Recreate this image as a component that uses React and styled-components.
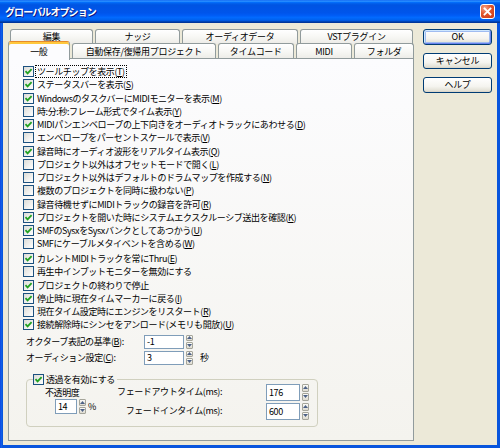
import React from 'react';
import styled, { createGlobalStyle } from 'styled-components';

const Global = createGlobalStyle`
  html, body { margin: 0; padding: 0; background: #fff; }
  body { font-family: "Noto Sans CJK JP", "Noto Sans", sans-serif; color: #000; }
  #root { width: 500px; height: 448px; }
`;

const Window = styled.div`
  width: 500px;
  height: 448px;
  box-sizing: border-box;
  display: flex;
  flex-direction: column;
  background: linear-gradient(90deg, #0831d9 0, #166aee 1px, #0855dd 2px, #0855dd 100%);
  overflow: hidden;
`;

const TitleBar = styled.div`
  height: 23px;
  flex: none;
  display: flex;
  align-items: center;
  justify-content: space-between;
  padding: 0 5px 0 5px;
  background: linear-gradient(180deg, #0058ee 0%, #3593ff 4%, #288eff 6%, #127dff 8%, #036ffc 10%, #0262ee 14%, #0057e5 20%, #0054e3 24%, #0055eb 56%, #005bf5 66%, #026afe 76%, #0062ef 86%, #0052d6 92%, #0040ab 94%, #003092 100%);
`;

const Title = styled.span`
  color: #fff;
  font-size: 10px;
  font-weight: bold;
  letter-spacing: -0.9px;
  text-shadow: 1px 1px 0 #0a1883;
`;

const CloseButton = styled.div`
  width: 15px;
  height: 15px;
  box-sizing: border-box;
  border: 1px solid #fff;
  border-radius: 3px;
  background: radial-gradient(circle at 30% 25%, #f4a48c 0%, #e0542a 45%, #c7381a 100%);
  display: flex;
  align-items: center;
  justify-content: center;
`;

const Body = styled.div`
  flex: 1;
  margin: 0 3px 3px 3px;
  background: #ece9d8;
  display: flex;
  gap: 9px;
  padding: 6px 5px 4px 5px;
  min-height: 0;
`;

const TabArea = styled.div`
  width: 406px;
  display: flex;
  flex-direction: column;
`;

const TabRow = styled.div`
  display: flex;
  align-items: flex-start;
  height: ${p => p.$h}px;
  padding-left: ${p => p.$pad || 0}px;
  gap: 2px;
`;

const Tab = styled.div`
  position: relative;
  width: ${p => p.$w}px;
  height: ${p => (p.$active ? 19 : p.$h + 1)}px;
  margin-top: ${p => (p.$active ? -2 : 0)}px;
  box-sizing: border-box;
  border: 1px solid #919b9c;
  border-bottom: none;
  border-radius: 3px 3px 0 0;
  background: ${p => (p.$active ? '#fcfcfe' : 'linear-gradient(180deg, #ffffff 0%, #f7f7f4 50%, #ecebe6 100%)')};
  ${p => p.$active && 'border-top: 1px solid #e68b2c; box-shadow: inset 0 2px 0 #ffc83c;'}
  z-index: ${p => (p.$active ? 3 : 1)};
  font-size: 9px;
  letter-spacing: -0.3px;
  line-height: ${p => (p.$active ? 17 : p.$h)}px;
  text-align: center;
  white-space: nowrap;
  padding-top: ${p => (p.$active ? 1 : 0)}px;
`;

const Panel = styled.div`
  flex: 1;
  position: relative;
  z-index: 2;
  border: 1px solid #919b9c;
  background: linear-gradient(180deg, #fcfcfe 0%, #f4f3ee 100%);
  padding: 6px 0 0 14px;
  display: flex;
  flex-direction: column;
  min-height: 0;
`;

const CheckRow = styled.div`
  display: flex;
  align-items: center;
  height: 13.25px;
  gap: 2px;
  margin-top: ${p => p.$gap || 0}px;
  font-size: 9px;
  letter-spacing: -0.4px;
  white-space: nowrap;
`;

const Box = styled.span`
  width: 11px;
  height: 11px;
  flex: none;
  box-sizing: border-box;
  border: 1px solid #1c5180;
  background: linear-gradient(135deg, #dcdcd7 0%, #ffffff 100%);
  display: flex;
  align-items: center;
  justify-content: center;
`;

const Label = styled.span`
  padding: 0 1px;
  line-height: 11px;
  outline: ${p => (p.$focus ? '1px dotted #000' : 'none')};
  outline-offset: 0;
  u { text-decoration: underline; text-underline-offset: 1px; }
`;

const NumRow = styled.div`
  display: flex;
  align-items: center;
  height: 14px;
  margin-top: ${p => p.$mt}px;
  padding-left: 3px;
  font-size: 9px;
  letter-spacing: -0.4px;
  white-space: nowrap;
`;

const NumLabel = styled.span`
  width: 118px;
  flex: none;
`;

const Input = styled.div`
  width: ${p => p.$w}px;
  height: ${p => p.$h}px;
  box-sizing: border-box;
  border: 1px solid #7f9db9;
  background: #fff;
  font-size: 9px;
  line-height: ${p => p.$h - 2}px;
  padding-left: 2px;
  flex: none;
`;

const Spin = styled.div`
  width: 7px;
  height: ${p => p.$h}px;
  margin-left: 2px;
  display: flex;
  flex-direction: column;
  gap: 1px;
  flex: none;
`;

const SpinHalf = styled.div`
  flex: 1;
  box-sizing: border-box;
  border: 1px solid #a5a59a;
  border-radius: 1px;
  background: linear-gradient(180deg, #fbfbf8 0%, #dedbd0 100%);
  display: flex;
  align-items: center;
  justify-content: center;
`;

const Unit = styled.span`
  margin-left: ${p => p.$ml}px;
  font-size: 9px;
`;

const Group = styled.div`
  position: relative;
  margin: 14px 0 0 3px;
  width: 292px;
  height: 48px;
  box-sizing: border-box;
  border: 1px solid #d0d0bf;
  border-radius: 4px;
  display: flex;
  padding: 4px 0 0 18px;
  font-size: 9px;
  letter-spacing: -0.4px;
`;

const Legend = styled.div`
  position: absolute;
  top: -7px;
  left: 6px;
  display: flex;
  align-items: center;
  gap: 2px;
  padding: 0 2px 0 0;
  background: #f5f4ef;
  height: 13px;
  white-space: nowrap;
`;

const OpacityCol = styled.div`
  width: 55px;
  display: flex;
  flex-direction: column;
  flex: none;
`;

const OpacityLabel = styled.div`
  margin-top: 2px;
  height: 13px;
  line-height: 13px;
`;

const SpinLine = styled.div`
  display: flex;
  align-items: center;
  margin-left: ${p => p.$ml || 0}px;
`;

const FadeGrid = styled.div`
  display: grid;
  grid-template-columns: 166px auto;
  grid-auto-rows: 17px;
  row-gap: 2px;
  align-items: center;
`;

const FadeLabel = styled.span`
  text-align: right;
  padding-right: 44px;
  white-space: nowrap;
  margin-top: ${p => p.$mt || 0}px;
`;

const ButtonCol = styled.div`
  width: 69px;
  display: flex;
  flex-direction: column;
  gap: 8px;
`;

const Button = styled.div`
  height: 16px;
  box-sizing: border-box;
  border: 1px solid #003c74;
  border-radius: 3px;
  background: linear-gradient(180deg, #ffffff 0%, #f5f4ef 60%, #e3e1d6 90%, #d6d0c5 100%);
  ${p => p.$default && 'box-shadow: inset 1px 1px 0 #cee7ff, inset -1px -1px 0 #6982ee, inset 0 0 0 2px #a0bcf0;'}
  font-size: 9px;
  letter-spacing: -0.3px;
  line-height: 14px;
  text-align: center;
`;

const Check = ({ on }) => (
  <Box>
    {on && (
      <svg width="9" height="9" viewBox="0 0 9 9">
        <path d="M1.5 4.2 L3.6 6.4 L7.6 2.2" fill="none" stroke="#21a121" strokeWidth="1.8" />
      </svg>
    )}
  </Box>
);

const Spinner = ({ h }) => (
  <Spin $h={h}>
    <SpinHalf>
      <svg width="5" height="3" viewBox="0 0 5 3"><path d="M2.5 0 L5 3 L0 3 Z" fill="#4d6185" /></svg>
    </SpinHalf>
    <SpinHalf>
      <svg width="5" height="3" viewBox="0 0 5 3"><path d="M0 0 L5 0 L2.5 3 Z" fill="#4d6185" /></svg>
    </SpinHalf>
  </Spin>
);

const L = ({ t, k }) =>
  k ? (
    <>
      {t}(<u>{k}</u>)
    </>
  ) : (
    <>{t}</>
  );

const options = [
  ['ツールチップを表示', 'T', true],
  ['ステータスバーを表示', 'S', true],
  ['WindowsのタスクバーにMIDIモニターを表示', 'M', true],
  ['時:分:秒:フレーム形式でタイム表示', 'Y', false],
  ['MIDIパンエンベロープの上下向きをオーディオトラックにあわせる', 'D', true],
  ['エンベロープをパーセントスケールで表示', 'V', false],
  ['録音時にオーディオ波形をリアルタイム表示', 'Q', true],
  ['プロジェクト以外はオフセットモードで開く', 'L', false],
  ['プロジェクト以外はデフォルトのドラムマップを作成する', 'N', false],
  ['複数のプロジェクトを同時に扱わない', 'P', false],
  ['録音待機せずにMIDIトラックの録音を許可', 'R', false],
  ['プロジェクトを開いた時にシステムエクスクルーシブ送出を確認', 'K', true],
  ['SMFのSysxをSysxバンクとしてあつかう', 'U', true],
  ['SMFにケーブルメタイベントを含める', 'W', false],
  ['カレントMIDIトラックを常にThru', 'E', true],
  ['再生中インプットモニターを無効にする', '', false],
  ['プロジェクトの終わりで停止', '', true],
  ['停止時に現在タイムマーカーに戻る', 'I', true],
  ['現在タイム設定時にエンジンをリスタート', 'R', false],
  ['接続解除時にシンセをアンロード(メモリも開放)', 'U', true],
];

const topTabs = [
  ['編集', 83],
  ['ナッジ', 85],
  ['オーディオデータ', 116],
  ['VSTプラグイン', 113],
];

const bottomTabs = [
  ['一般', 62, true],
  ['自動保存/復帰用プロジェクト', 145],
  ['タイムコード', 76],
  ['MIDI', 57],
  ['フォルダ', 60],
];

export default function App() {
  return (
    <>
      <Global />
      <Window>
        <TitleBar>
          <Title>グローバルオプション</Title>
          <CloseButton>
            <svg width="9" height="9" viewBox="0 0 9 9">
              <path d="M1.5 1.5 L7.5 7.5 M7.5 1.5 L1.5 7.5" stroke="#fff" strokeWidth="1.8" strokeLinecap="square" />
            </svg>
          </CloseButton>
        </TitleBar>
        <Body>
          <TabArea>
            <TabRow $h={14} $pad={2}>
              {topTabs.map(([t, w]) => (
                <Tab key={t} $w={w} $h={14}>{t}</Tab>
              ))}
            </TabRow>
            <TabRow $h={15}>
              {bottomTabs.map(([t, w, a]) => (
                <Tab key={t} $w={w} $h={15} $active={a}>{t}</Tab>
              ))}
            </TabRow>
            <Panel>
              {options.map(([t, k, on], i) => (
                <CheckRow key={i} $gap={i === 14 ? 1.5 : 0}>
                  <Check on={on} />
                  <Label $focus={i === 0}>
                    <L t={t} k={k} />
                  </Label>
                </CheckRow>
              ))}
              <NumRow $mt={3}>
                <NumLabel>
                  <L t="オクターブ表記の基準" k="B" />:
                </NumLabel>
                <Input $w={40} $h={14}>-1</Input>
                <Spinner h={14} />
              </NumRow>
              <NumRow $mt={2}>
                <NumLabel>
                  <L t="オーディション設定" k="C" />:
                </NumLabel>
                <Input $w={40} $h={14}>3</Input>
                <Spinner h={14} />
                <Unit $ml={7}>秒</Unit>
              </NumRow>
              <Group>
                <Legend>
                  <Check on />
                  <span>透過を有効にする</span>
                </Legend>
                <OpacityCol>
                  <OpacityLabel>不透明度</OpacityLabel>
                  <SpinLine $ml={10}>
                    <Input $w={22} $h={15}>14</Input>
                    <Spinner h={15} />
                    <Unit $ml={2}>%</Unit>
                  </SpinLine>
                </OpacityCol>
                <FadeGrid>
                  <FadeLabel $mt={-2}>フェードアウトタイム(ms):</FadeLabel>
                  <SpinLine>
                    <Input $w={34} $h={17}>176</Input>
                    <Spinner h={17} />
                  </SpinLine>
                  <FadeLabel $mt={-2}>フェードインタイム(ms):</FadeLabel>
                  <SpinLine>
                    <Input $w={34} $h={17}>600</Input>
                    <Spinner h={17} />
                  </SpinLine>
                </FadeGrid>
              </Group>
            </Panel>
          </TabArea>
          <ButtonCol>
            <Button $default>OK</Button>
            <Button>キャンセル</Button>
            <Button>ヘルプ</Button>
          </ButtonCol>
        </Body>
      </Window>
    </>
  );
}
